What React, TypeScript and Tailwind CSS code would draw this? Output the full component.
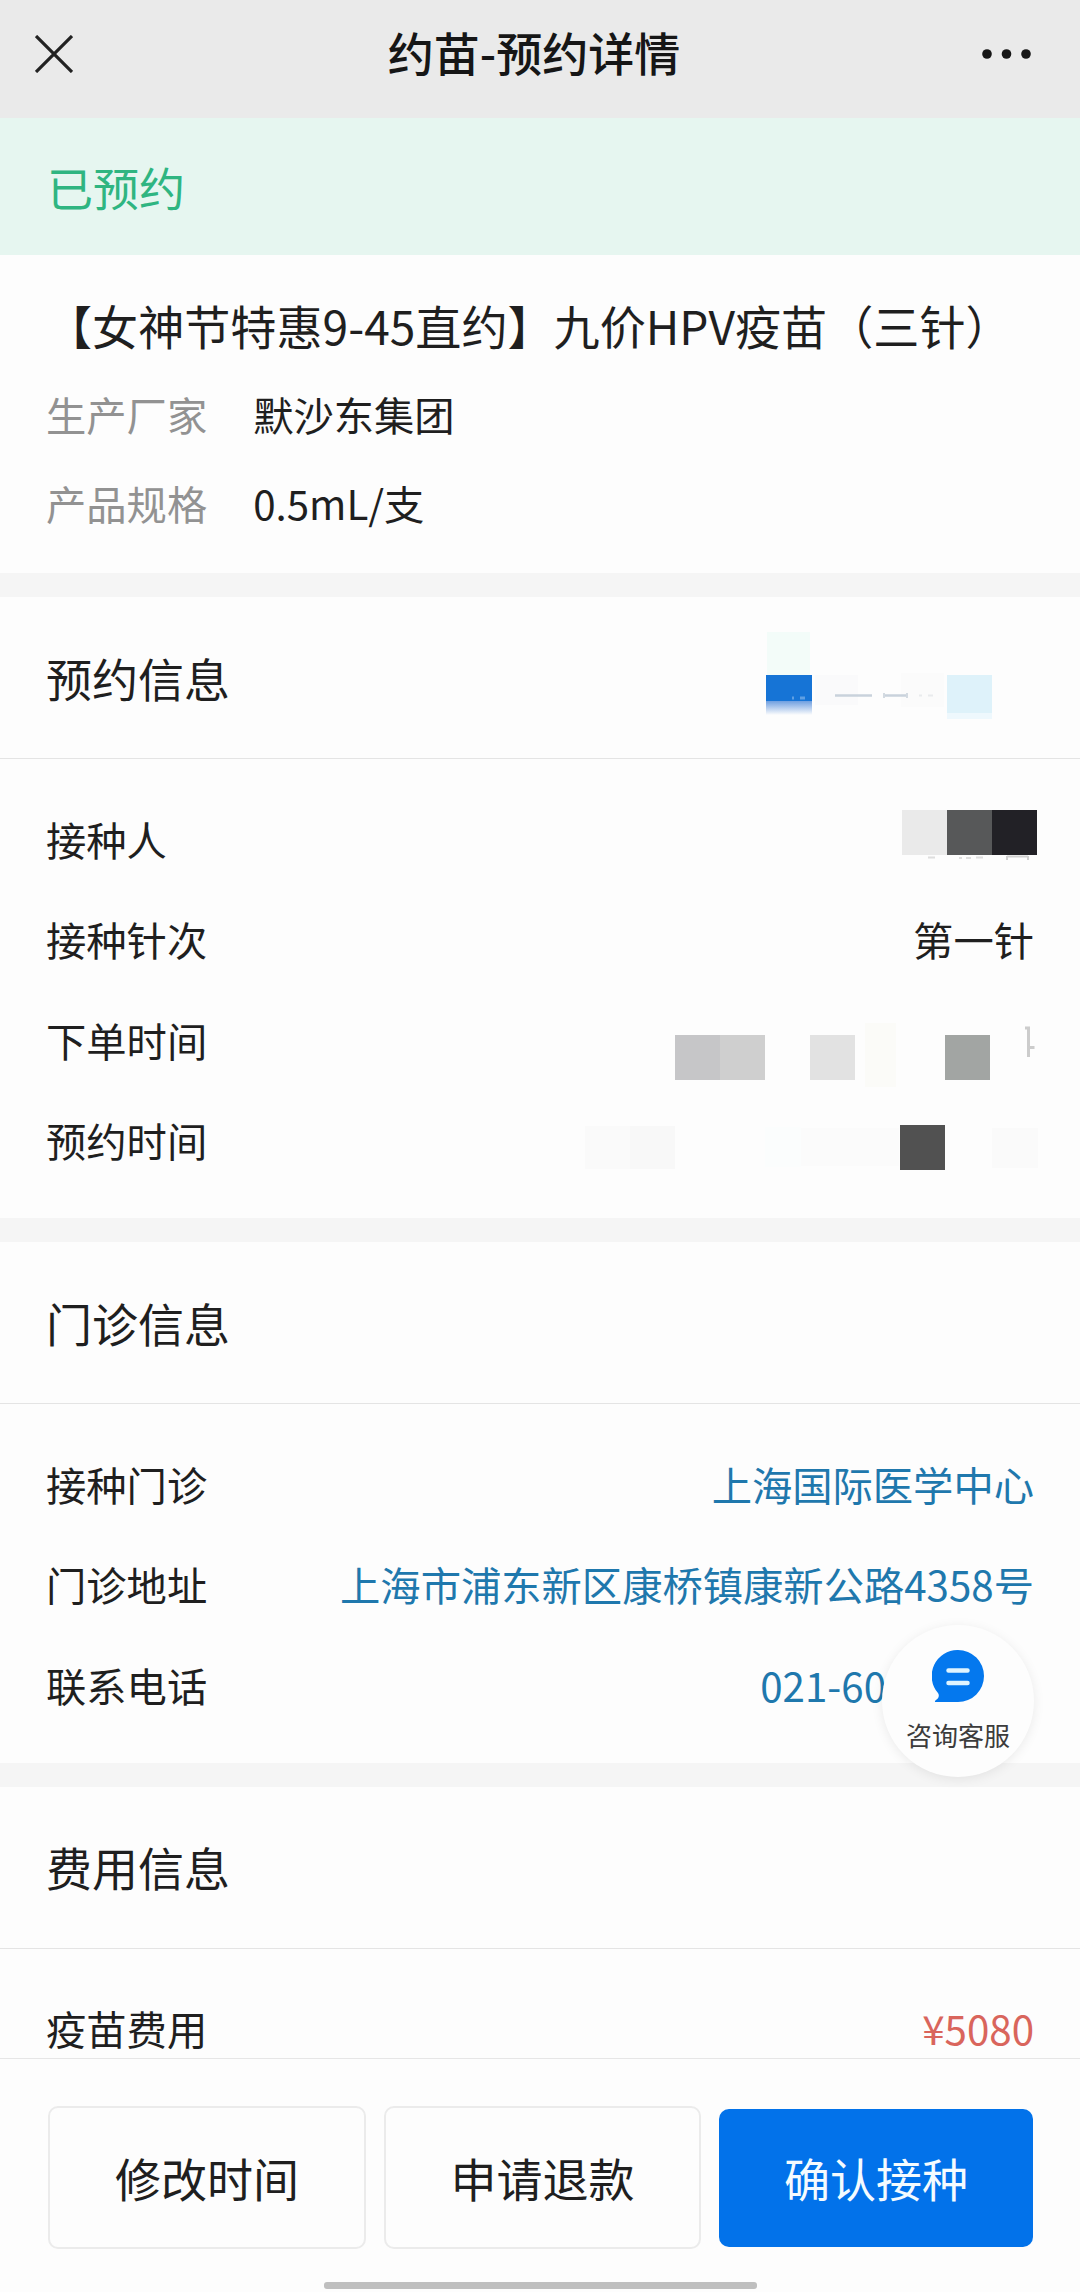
import type { ReactNode } from 'react';

interface RowProps {
  label: string;
  children?: ReactNode;
}

interface SectionProps {
  title: string;
  extra?: ReactNode;
  children?: ReactNode;
}

function ProductRow({ label, children }: RowProps) {
  return (
    <div className="flex h-[89.500px] items-center gap-[46px] text-[40.3px]">
      <span className="text-[#929292]">{label}</span>
      <span>{children}</span>
    </div>
  );
}

function InfoRow({ label, children }: RowProps) {
  return (
    <div className="flex h-[100.5px] items-center justify-between text-[40.3px]">
      <span>{label}</span>
      {children}
    </div>
  );
}

function Section({ title, extra, children }: SectionProps) {
  return (
    <section>
      <div className="flex h-[162px] items-center justify-between border-b border-[#e4e4e4] pb-px pl-[46px] pr-[46px]">
        <h2 className="text-[46px]">{title}</h2>
        {extra}
      </div>
      <div className="pb-[27.5px] pl-[46px] pr-[46px] pt-[29.5px]">{children}</div>
    </section>
  );
}

function Divider() {
  return <div className="h-6 shrink-0 bg-[#f5f5f5]" />;
}

// masked appointment number
function CodeMask() {
  return (
    <svg className="mr-[42px] mt-[35px] self-start" width="226" height="88" viewBox="0 0 226 88">
      <defs>
        <linearGradient id="fade" x1="0" y1="0" x2="0" y2="1">
          <stop offset="0" stopColor="#6f9fe0" />
          <stop offset="1" stopColor="#fdfdfd" />
        </linearGradient>
      </defs>
      <rect x="1" y="0" width="43" height="43" fill="#f3fcf9" />
      <rect x="0" y="43" width="46" height="26" fill="#1674d6" />
      <rect x="0" y="69" width="46" height="14" fill="url(#fade)" />
      <path d="M26 66h2M34 66h5" stroke="#5f9fe3" strokeWidth="3" />
      <rect x="49" y="43" width="43" height="30" fill="#fafafb" />
      <rect x="135" y="41" width="43" height="34" fill="#fbfbfb" />
      <path d="M69 63.5h37M118 63.5h24" stroke="#c9d2dc" strokeWidth="2.500" />
      <path d="M118 61v5M141 61v5" stroke="#d3dae1" strokeWidth="2" />
      <path d="M153 63.5h3M162 63.5h5" stroke="#e9ebed" strokeWidth="2" />
      <rect x="181" y="43" width="45" height="38" fill="#def2fa" />
      <rect x="181" y="81" width="45" height="6" fill="#eef8fd" />
    </svg>
  );
}

function NameMask() {
  return (
    <svg className="mr-[-3px] mt-[21.5px] self-start" width="135" height="52" viewBox="0 0 135 52">
      <rect width="45" height="45" fill="#eaeaea" />
      <rect x="45" width="45" height="45" fill="#575859" />
      <rect x="90" width="45" height="45" fill="#222126" />
      <path d="M26 47.500h7M57 48h3M64 48h5M74 47.500h7" stroke="#dedede" strokeWidth="2" />
      <path d="M105 46v4M126 46v4M105 46.500h21" stroke="#cfcfcf" strokeWidth="2" fill="none" />
    </svg>
  );
}

function OrderTimeMask() {
  return (
    <svg className="mr-[-3px] mt-[33.500px] self-start" width="362" height="66" viewBox="0 0 362 66">
      <rect y="12" width="45" height="45" fill="#c6c6c8" />
      <rect x="45" y="12" width="45" height="45" fill="#cfcfcf" />
      <rect x="135" y="12" width="45" height="45" fill="#e2e2e2" />
      <rect x="190" y="0" width="31" height="64" fill="#fbfbf8" />
      <rect x="270" y="12" width="45" height="45" fill="#a2a5a3" />
      <path d="M353.500 4v30M353.500 24.500h6M350 5h5" stroke="#cccccc" strokeWidth="3" fill="none" />
    </svg>
  );
}

function VisitTimeMask() {
  return (
    <svg className="mr-[-4px] mt-[34.500px] self-start" width="453" height="46" viewBox="0 0 453 46">
      <rect y="1" width="45" height="43" fill="#fafafa" />
      <rect x="45" y="1" width="45" height="43" fill="#f8f8f8" />
      <rect x="180" y="2" width="36" height="40" fill="#fbfdfd" />
      <rect x="216" y="3" width="98" height="38" fill="#fbfbfb" />
      <rect x="315" y="0" width="45" height="45" fill="#515151" />
      <rect x="407" y="3" width="46" height="40" fill="#fafafa" />
    </svg>
  );
}

function ServiceButton() {
  return (
    <button className="absolute left-[882px] top-[1625px] flex size-[152px] flex-col items-center rounded-full bg-[#fdfdfd] pt-[25px] text-[#3c3c3c] shadow-[0_2px_12px_rgba(0,0,0,0.08)]">
      <svg width="52" height="52" viewBox="0 0 52 52">
        <path d="M26 0a26 26 0 0 1 0 52H4c-1.500 0-1.500-1 0-2 3-2 3.500-5 2-7A26 26 0 0 1 26 0Z" fill="#0478ee" />
        <path d="M16.500 20.500h19M16.500 33h19" stroke="#dff4ff" strokeWidth="4.500" strokeLinecap="round" />
      </svg>
      <span className="mt-[14px] text-[26px] leading-[38px]">咨询客服</span>
    </button>
  );
}

export default function App() {
  return (
    <div className="relative flex h-[2292px] w-[1080px] flex-col overflow-hidden bg-[#fdfdfd] font-['Noto_Sans_CJK_SC',sans-serif] text-[#1f1f1f]">
      <header className="flex h-[118px] shrink-0 items-center justify-between bg-[#eaeaea] pb-[15px] pl-[35px] pr-12">
        <svg className="mt-1" width="38" height="38" viewBox="0 0 38 38">
          <path d="M1 1l36 36M37 1L1 37" stroke="#222" strokeWidth="3.200" />
        </svg>
        <h1 className="ml-[13px] text-[46px] font-medium text-[#161616]">约苗-预约详情</h1>
        <svg className="mt-1" width="50" height="10" viewBox="0 0 50 10">
          <circle cx="5" cy="5" r="4.800" fill="#161616" />
          <circle cx="24.500" cy="5" r="4.800" fill="#161616" />
          <circle cx="44" cy="5" r="4.800" fill="#161616" />
        </svg>
      </header>

      <div className="flex h-[137px] shrink-0 items-center bg-[#e6f6f0] pl-[47px] text-[46px] text-[#2fb581]">
        已预约
      </div>

      <main className="flex-1 overflow-hidden">
        <section className="h-[318px] pl-[46px] pt-[35px]">
          <h2 className="mb-[9px] text-[46.1px] leading-[70px]">【女神节特惠9-45直约】九价HPV疫苗（三针）</h2>
          <ProductRow label="生产厂家">默沙东集团</ProductRow>
          <ProductRow label="产品规格">0.5mL/支</ProductRow>
        </section>
        <Divider />

        <Section title="预约信息" extra={<CodeMask />}>
          <InfoRow label="接种人">
            <NameMask />
          </InfoRow>
          <InfoRow label="接种针次">第一针</InfoRow>
          <InfoRow label="下单时间">
            <OrderTimeMask />
          </InfoRow>
          <InfoRow label="预约时间">
            <VisitTimeMask />
          </InfoRow>
        </Section>
        <Divider />

        <Section title="门诊信息">
          <InfoRow label="接种门诊">
            <span className="text-[#1f78ad]">上海国际医学中心</span>
          </InfoRow>
          <InfoRow label="门诊地址">
            <span className="text-[#1f78ad]">上海市浦东新区康桥镇康新公路4358号</span>
          </InfoRow>
          <InfoRow label="联系电话">
            <span className="mr-[148px] text-[#1f78ad]">021-60</span>
          </InfoRow>
        </Section>
        <Divider />

        <Section title="费用信息">
          <InfoRow label="疫苗费用">
            <span className="text-[#d9655c]">¥5080</span>
          </InfoRow>
        </Section>
      </main>

      <footer className="flex h-[234px] shrink-0 flex-col items-center border-t border-[#e6e6e6] bg-[#fdfdfd] pt-[47px] text-[46px]">
        <div className="flex w-full items-center gap-[18px] pl-[48px] pr-[47px]">
          <button className="h-[143px] w-[318px] rounded-[10px] border-2 border-[#ebebeb]">修改时间</button>
          <button className="h-[143px] w-[317px] rounded-[10px] border-2 border-[#ebebeb]">申请退款</button>
          <button className="h-[138px] flex-1 rounded-[10px] bg-[#0272ea] text-[#f4fbff]">确认接种</button>
        </div>
        <div className="mt-[33px] h-[7px] w-[433px] rounded-[3px] bg-[#bfbfbf]" />
      </footer>

      <ServiceButton />
    </div>
  );
}
